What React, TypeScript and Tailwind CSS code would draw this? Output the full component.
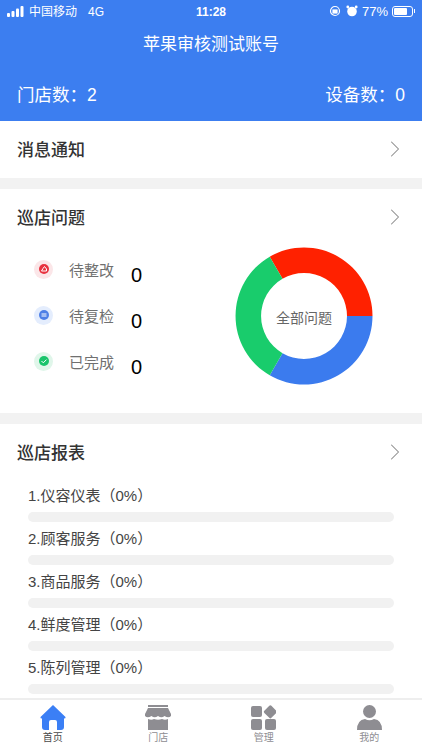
import { ChevronRight } from "lucide-react";

const font = { fontFamily: '"Liberation Sans", "Noto Sans CJK SC", sans-serif' };

const statuses = [
  { label: "待整改", ring: "bg-[#fbe6e8]", dot: "bg-[#e8323f]", icon: "M-2.5 2 L-1 -0.5 L0.5 -2.5 L2.5 0 L2.5 2 Z" },
  { label: "待复检", ring: "bg-[#e4edfd]", dot: "bg-[#4f80e6]", icon: "M-2.5 -1 L2.5 -1 M-2.5 1 L2.5 1" },
  { label: "已完成", ring: "bg-[#e0f6ea]", dot: "bg-[#19c46b]", icon: "M-2.5 0 L-0.7 1.8 L2.5 -1.4" },
];

const reports = ["1.仪容仪表（0%）", "2.顾客服务（0%）", "3.商品服务（0%）", "4.鲜度管理（0%）", "5.陈列管理（0%）"];

function SectionHead({ title }: { title: string }) {
  return (
    <div className="flex h-[56px] items-center justify-between pl-[17px] pr-[13px]">
      <span className="pt-[4px] text-[17px] font-medium text-[#333333]">{title}</span>
      <ChevronRight size={28} strokeWidth={0.9} className="text-[#8a8a8a]" />
    </div>
  );
}

function Donut() {
  return (
    <div className="relative h-[138px] w-[138px]">
      <svg width="138" height="138" viewBox="-69 -69 138 138">
        <path d="M68.5 0 A68.5 68.5 0 0 0 -34.25 -59.3 L-21.5 -37.2 A43 43 0 0 1 43 0 Z" fill="#ff2100" />
        <path d="M68.5 0 A68.5 68.5 0 0 1 -34.25 59.3 L-21.5 37.2 A43 43 0 0 0 43 0 Z" fill="#3b7bee" />
        <path d="M-34.25 -59.3 A68.5 68.5 0 0 0 -34.25 59.3 L-21.5 37.2 A43 43 0 0 1 -21.5 -37.2 Z" fill="#19cc6c" />
      </svg>
      <div className="absolute inset-0 flex items-center justify-center pt-[4px] text-[14px] text-[#666666]">全部问题</div>
    </div>
  );
}

function HomeIcon() {
  return (
    <svg width="26" height="25" viewBox="0 0 26 25">
      <path d="M13 0 L25.5 12 Q26 13.5 24 13.5 L24 22 Q24 25 21 25 L17 25 L17 17 Q17 15 15 15 L11 15 Q9 15 9 17 L9 25 L5 25 Q2 25 2 22 L2 13.5 Q0 13.5 0.5 12 Z" fill="#3b7ff5" />
    </svg>
  );
}

function ShopIcon() {
  return (
    <svg width="26" height="25" viewBox="0 0 26 25" fill="#8e8d92">
      <rect x="3" y="0" width="20" height="2" />
      <path d="M3 3 L23 3 L26 9 L26 11 Q23.5 13.5 19.5 11 Q16.5 13.5 13 11 Q9.5 13.5 6.5 11 Q2.5 13.5 0 11 L0 9 Z" />
      <path d="M3 14 Q6.5 15.5 9 14 Q13 15.5 17 14 Q20 15.5 23 14 L23 25 L3 25 Z" />
    </svg>
  );
}

function GridIcon() {
  return (
    <svg width="25" height="25" viewBox="0 0 25 25" fill="#8e8d92">
      <rect x="0" y="1" width="11" height="11" rx="2" />
      <rect x="14.5" y="1.5" width="10" height="10" rx="1.5" transform="rotate(45 19 6.5)" />
      <rect x="0" y="14" width="11" height="11" rx="2" />
      <rect x="14" y="14" width="11" height="11" rx="2" />
    </svg>
  );
}

function UserIcon() {
  return (
    <svg width="25" height="25" viewBox="0 0 25 25" fill="#8e8d92">
      <circle cx="12.5" cy="6.5" r="6.5" />
      <path d="M0 25 Q0 15 8 14 Q12.5 16.5 17 14 Q25 15 25 25 Z" />
    </svg>
  );
}

const tabs = [
  { label: "首页", icon: <HomeIcon />, text: "text-[#4a4a4a]" },
  { label: "门店", icon: <ShopIcon />, text: "text-[#8e8d92]" },
  { label: "管理", icon: <GridIcon />, text: "text-[#8e8d92]" },
  { label: "我的", icon: <UserIcon />, text: "text-[#8e8d92]" },
];

export default function App() {
  return (
    <div className="flex h-[750px] w-[422px] flex-col overflow-hidden bg-white" style={font}>
      <header className="h-[121px] bg-[#3c7ef0] text-white">
        <div className="grid h-[22px] grid-cols-[1fr_auto_1fr] items-center pl-[7px] pr-[7px] text-[12px]">
          <div className="flex items-center gap-[5px]">
            <svg width="17" height="11" viewBox="0 0 17 11" fill="white">
              <rect x="0" y="7" width="3" height="4" rx="1" />
              <rect x="4.5" y="5" width="3" height="6" rx="1" />
              <rect x="9" y="2.5" width="3" height="8.5" rx="1" />
              <rect x="13.5" y="0" width="3" height="11" rx="1" />
            </svg>
            <span className="pt-[2px]">中国移动</span>
            <span className="ml-[6px] pt-[2px]">4G</span>
          </div>
          <span className="pt-[2px] font-bold">11:28</span>
          <div className="flex items-center justify-end gap-[4px]">
            <svg width="12" height="12" viewBox="0 0 12 12" fill="none" stroke="white" strokeWidth="1.2">
              <circle cx="6" cy="6" r="4.5" />
              <rect x="4" y="5" width="4" height="3" fill="white" />
            </svg>
            <svg className="ml-[1px]" width="12" height="12" viewBox="0 0 12 12" fill="white">
              <circle cx="6" cy="6.5" r="4.8" />
              <circle cx="1.8" cy="2" r="1.4" />
              <circle cx="10.2" cy="2" r="1.4" />
            </svg>
            <span className="pt-[2px] text-[13px]">77%</span>
            <div className="flex items-center">
              <div className="h-[11px] w-[21px] rounded-[3px] border border-white p-[1px]">
                <div className="h-full w-[77%] rounded-[1px] bg-white" />
              </div>
              <div className="ml-[1px] h-[4px] w-[1px] bg-white" />
            </div>
          </div>
        </div>
        <div className="flex h-[42px] items-center justify-center pt-[4px] text-[17px]">苹果审核测试账号</div>
        <div className="mt-[8px] flex h-[44px] items-center justify-between px-[17px] pt-[2px] text-[17.5px]">
          <span>门店数：2</span>
          <span>设备数：0</span>
        </div>
      </header>

      <main className="flex-1 overflow-hidden">
        <div className="h-[57px]">
          <SectionHead title="消息通知" />
        </div>
        <div className="h-[11px] bg-[#f2f2f2]" />

        <section className="h-[224px]">
          <SectionHead title="巡店问题" />
          <div className="flex items-start">
            <div className="w-[218px] pl-[34px] pt-[1px]">
              {statuses.map((s) => (
                <div key={s.label} className="flex h-[46px] items-center">
                  <div className={`flex h-[19px] w-[19px] items-center justify-center rounded-full ${s.ring}`}>
                    <div className={`flex h-[10px] w-[10px] items-center justify-center rounded-full ${s.dot}`}>
                      <svg width="8" height="8" viewBox="-4 -4 8 8" fill="none" stroke="white" strokeWidth="1">
                        <path d={s.icon} />
                      </svg>
                    </div>
                  </div>
                  <span className="ml-[16px] pt-[4px] text-[15px] text-[#707070]">{s.label}</span>
                  <span className="ml-[17px] mt-[12px] text-[20px] text-black">0</span>
                </div>
              ))}
            </div>
            <div className="ml-[17px] mt-[2px]">
              <Donut />
            </div>
          </div>
        </section>

        <div className="h-[11px] bg-[#f2f2f2]" />

        <SectionHead title="巡店报表" />
        <div className="px-[28px]">
          {reports.map((r) => (
            <div key={r} className="h-[43px]">
              <div className="flex h-[32px] items-center text-[15px] text-[#444444]">{r}</div>
              <div className="h-[10px] rounded-full bg-[#f1f1f1]" />
            </div>
          ))}
        </div>
      </main>

      <nav className="grid h-[52px] grid-cols-4 border-t-2 border-[#eeeeee] bg-white">
        {tabs.map((t) => (
          <div key={t.label} className="flex flex-col items-center pt-[5px]">
            {t.icon}
            <span className={`text-[10px] leading-[16px] ${t.text}`}>{t.label}</span>
          </div>
        ))}
      </nav>
    </div>
  );
}
